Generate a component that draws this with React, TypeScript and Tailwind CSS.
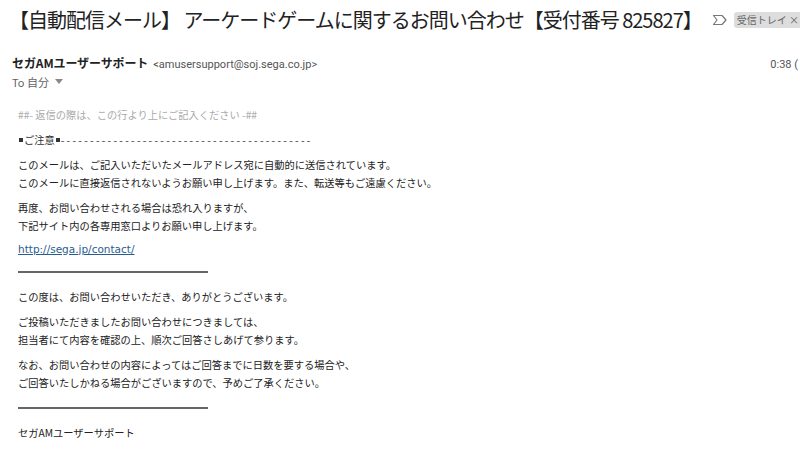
const JP = { fontFamily: '"Noto Sans CJK JP", "Noto Sans", sans-serif' };
const LATIN = { fontFamily: 'Roboto, "Liberation Sans", sans-serif' };

function ImportanceIcon() {
  return (
    <svg width="16" height="12" viewBox="0 0 16 12" className="shrink-0">
      <path d="M1.5 1.5 H10 L14 6 L10 10.5 H1.5 L5 6 Z" fill="none" stroke="#777" strokeWidth="1.2" strokeLinejoin="round" />
    </svg>
  );
}

function Square() {
  return <span className="inline-block w-[4px] h-[4px] bg-[#333] align-middle mx-[1px] -mt-[2px]" />;
}

function Rule() {
  return <div className="w-[190px] h-[2px] bg-[#666] my-[8px]" />;
}

export default function App() {
  const dashes = "-".repeat(43);
  return (
    <div className="w-[800px] h-[450px] overflow-hidden bg-white text-[#222]" style={JP}>
      {/* subject */}
      <div className="flex items-center whitespace-nowrap pl-[9px] pt-[6px] h-[34px]">
        <h1 className="text-[20px] font-normal tracking-[-1px] leading-none">
          【自動配信メール】 アーケードゲームに関するお問い合わせ【受付番号 825827】
        </h1>
        <div className="ml-[10px] flex items-center gap-[6px] shrink-0">
          <ImportanceIcon />
          <span className="bg-[#dddddd] text-[#666] text-[10px] rounded-[3px] pl-[3px] pr-[4px] leading-[16px]">受信トレイ ×</span>
        </div>
      </div>

      {/* sender */}
      <div className="flex items-baseline whitespace-nowrap pl-[12px] mt-[20px]">
        <span className="text-[12px] font-bold tracking-[-0.1px]">セガAMユーザーサポート</span>
        <span className="ml-[5px] text-[11px] text-[#555]" style={LATIN}>
          &lt;amusersupport@soj.sega.co.jp&gt;
        </span>
        <span className="ml-auto mr-[2px] text-[11px] text-[#555]" style={LATIN}>
          0:38 (
        </span>
      </div>
      <div className="flex items-center gap-[6px] pl-[12px] text-[11px] text-[#5f6368] leading-[16px]">
        <span>To 自分</span>
        <svg width="8" height="5" viewBox="0 0 8 5"><path d="M0 0 H8 L4 5 Z" fill="#888" /></svg>
      </div>

      {/* body */}
      <div className="pl-[18px] pt-[16px] text-[10.25px] leading-[18px] whitespace-nowrap flex flex-col gap-[7px]">
        <p className="text-[#aaa]">##- 返信の際は、この行より上にご記入ください -##</p>
        <p className="text-[#333]">
          <Square />ご注意<Square /><span className="tracking-[2.3px]">{dashes}</span>
        </p>
        <p>
          このメールは、ご記入いただいたメールアドレス宛に自動的に送信されています。<br />
          このメールに直接返信されないようお願い申し上げます。また、転送等もご遠慮ください。
        </p>
        <p>
          再度、お問い合わせされる場合は恐れ入りますが、<br />
          下記サイト内の各専用窓口よりお願い申し上げます。
        </p>
        <p className="leading-[14px]">
          <a className="text-[#2a5d8f] underline text-[10.5px]" style={{ fontFamily: '"DejaVu Sans", Verdana, sans-serif' }}>
            http://sega.jp/contact/
          </a>
        </p>
        <Rule />
        <p>この度は、お問い合わせいただき、ありがとうございます。</p>
        <p>
          ご投稿いただきましたお問い合わせにつきましては、<br />
          担当者にて内容を確認の上、順次ご回答さしあげて参ります。
        </p>
        <p>
          なお、お問い合わせの内容によってはご回答までに日数を要する場合や、<br />
          ご回答いたしかねる場合がございますので、予めご了承ください。
        </p>
        <Rule />
        <p>セガAMユーザーサポート</p>
      </div>
    </div>
  );
}
